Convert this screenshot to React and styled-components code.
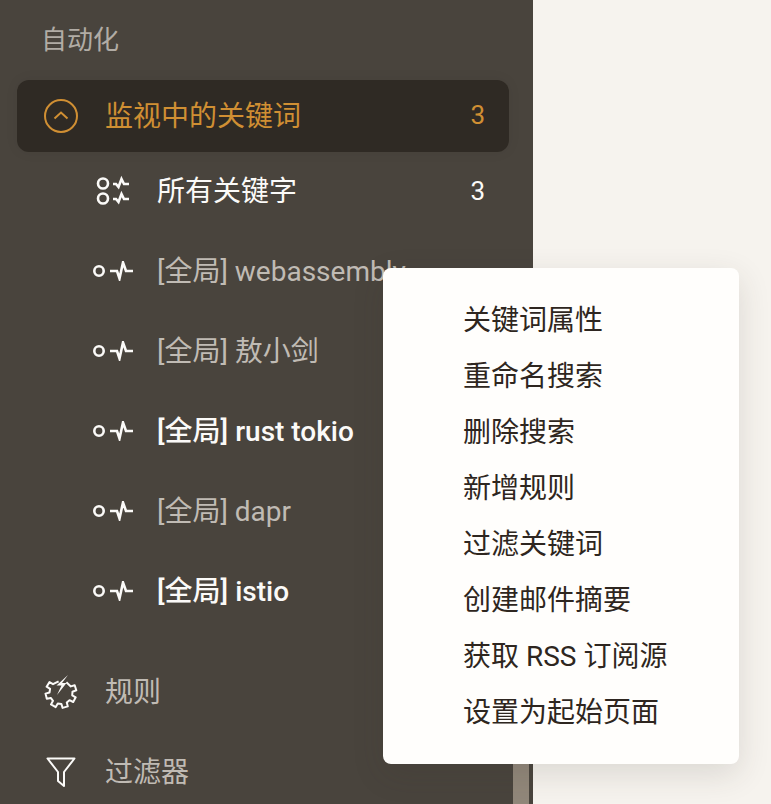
import styled, { createGlobalStyle } from "styled-components";

const GlobalStyle = createGlobalStyle`
  html, body {
    margin: 0;
    height: 100%;
    overflow: hidden;
    background: #f6f3ee;
  }

  body {
    font-family: Roboto, "Noto Sans CJK SC", sans-serif;
  }
`;

const Page = styled.div`
  position: relative;
  width: 771px;
  height: 804px;
  overflow: hidden;
  background: #f6f3ee;
`;

const Sidebar = styled.nav`
  width: 533px;
  height: 804px;
  box-sizing: border-box;
  padding: 20px 24px 0 17px;
  background: #49443d;
  overflow: hidden;
`;

const SectionLabel = styled.div`
  height: 40px;
  margin-bottom: 20px;
  padding-left: 24px;
  font-size: 26px;
  line-height: 40px;
  color: #b1aca5;
`;

const ActiveRow = styled.div`
  display: flex;
  align-items: center;
  height: 72px;
  box-sizing: border-box;
  padding: 2px 24px 0 27px;
  border-radius: 12px;
  background: #2f2a24;
  box-shadow: 0 0 14px rgba(0, 0, 0, 0.06);
  color: #d08f33;
  font-size: 28px;
  line-height: 40px;
`;

const TopIcon = styled.span`
  display: flex;
  flex: none;
  justify-content: center;
  width: 34px;
  margin: 0 27px 2px 0;
  color: ${(p) => (p.$light ? "#fbfaf8" : "inherit")};
`;

const Row = styled.div`
  display: flex;
  align-items: center;
  height: 80px;
  padding: 0 24px 0 ${(p) => (p.$nested ? 76 : 27)}px;
  font-size: 28px;
  line-height: 40px;
  font-weight: ${(p) => (p.$unread ? 500 : 400)};
  color: ${(p) => (p.$muted ? "#c0bbb4" : "#fbfaf8")};
  white-space: nowrap;
`;

const NestedIcon = styled.span`
  display: flex;
  flex: none;
  width: 61px;
  margin: 0 20px 2px -17px;
  padding-left: 17px;
  box-sizing: border-box;
  color: #fbfaf8;
`;

const Count = styled.span`
  margin-left: auto;
  margin-bottom: ${(p) => (p.$active ? 4 : 2)}px;
  font-size: 26px;
  font-weight: 400;
`;

const RowGap = styled.div`
  height: 21px;
`;

const ScrollThumb = styled.div`
  position: absolute;
  left: 513px;
  top: 700px;
  width: 16px;
  height: 104px;
  background: #91877a;
`;

const Menu = styled.ul`
  position: absolute;
  left: 383px;
  top: 268px;
  width: 356px;
  height: 496px;
  box-sizing: border-box;
  margin: 0;
  padding: 25px 0 0;
  list-style: none;
  border-radius: 8px;
  background: #fffefc;
  box-shadow: 0 10px 32px rgba(60, 50, 40, 0.14);
`;

const MenuItem = styled.li`
  height: 56px;
  padding-left: 80px;
  font-size: 28px;
  line-height: 56px;
  color: #2e2620;
  white-space: nowrap;
`;

// wave is drawn once and repeated for the double-row icon
const wave = (y) => `M20 ${y}h3l2.5 3 3-8 2.5 5h5`;

const OrbitIcon = () => (
  <svg width="40" height="20" viewBox="0 0 40 20" fill="none" stroke="currentColor" strokeWidth="2.6">
    <circle cx="6" cy="10" r="4.7" />
    <path d="M17 10h7l2.5 7.5 3.5-16 3 8.5h7" />
  </svg>
);

const OrbitPairIcon = () => (
  <svg width="40" height="34" viewBox="0 0 40 34" fill="none" stroke="currentColor" strokeWidth="2.6">
    <circle cx="10" cy="9.5" r="5" />
    <circle cx="10" cy="24.5" r="5" />
    <path d={`${wave(10)}${wave(25)}`} />
  </svg>
);

const ChevronCircle = () => (
  <svg width="34" height="34" viewBox="0 0 34 34" fill="none" stroke="currentColor" strokeWidth="2">
    <circle cx="17" cy="17" r="16" />
    <path d="M10.5 19.5l6.5-6 6.5 6" />
  </svg>
);

const gearPoints = () => {
  const teeth = [-18, 28, 74, 120, 166, 212];
  const at = (deg, r) => {
    const a = (deg * Math.PI) / 180;
    return `${(17 + r * Math.cos(a)).toFixed(1)} ${(17.5 + r * Math.sin(a)).toFixed(1)}`;
  };
  const pts = [at(-62, 11.5)];
  teeth.forEach((t) => {
    pts.push(at(t - 14, 11.5), at(t - 10, 15.5), at(t + 10, 15.5), at(t + 14, 11.5));
  });
  pts.push(at(-102, 11.5));
  return `M${pts.join("L")}`;
};

const GearBolt = () => (
  <svg width="34" height="34" viewBox="0 0 34 34" fill="none" stroke="currentColor" strokeWidth="2" strokeLinejoin="round">
    <path d={gearPoints()} />
    <path d="M24 0L12.5 10.5h5L13 20l9.5-12h-4.5z" fill="currentColor" stroke="none" />
  </svg>
);

const FunnelIcon = () => (
  <svg width="30" height="30" viewBox="0 0 30 30" fill="none" stroke="currentColor" strokeWidth="2" strokeLinejoin="round">
    <path d="M1.5 1.5h27L18 15v14l-6-5v-9z" />
  </svg>
);

const keywords = [
  { label: "[全局] webassembly", muted: true },
  { label: "[全局] 敖小剑", muted: true },
  { label: "[全局] rust tokio", unread: true },
  { label: "[全局] dapr", muted: true },
  { label: "[全局] istio", unread: true },
];

const menuItems = [
  "关键词属性",
  "重命名搜索",
  "删除搜索",
  "新增规则",
  "过滤关键词",
  "创建邮件摘要",
  "获取 RSS 订阅源",
  "设置为起始页面",
];

const App = () => (
  <Page>
    <GlobalStyle />
    <Sidebar>
      <SectionLabel>自动化</SectionLabel>
      <ActiveRow>
        <TopIcon>
          <ChevronCircle />
        </TopIcon>
        监视中的关键词
        <Count $active>3</Count>
      </ActiveRow>
      <Row $nested>
        <NestedIcon>
          <OrbitPairIcon />
        </NestedIcon>
        所有关键字
        <Count>3</Count>
      </Row>
      {keywords.map(({ label, muted, unread }) => (
        <Row $nested $muted={muted} $unread={unread} key={label}>
          <NestedIcon>
            <OrbitIcon />
          </NestedIcon>
          {label}
        </Row>
      ))}
      <RowGap />
      <Row $muted>
        <TopIcon $light>
          <GearBolt />
        </TopIcon>
        规则
      </Row>
      <Row $muted>
        <TopIcon $light>
          <FunnelIcon />
        </TopIcon>
        过滤器
      </Row>
    </Sidebar>
    <ScrollThumb />
    <Menu>
      {menuItems.map((item) => (
        <MenuItem key={item}>{item}</MenuItem>
      ))}
    </Menu>
  </Page>
);

export default App;
